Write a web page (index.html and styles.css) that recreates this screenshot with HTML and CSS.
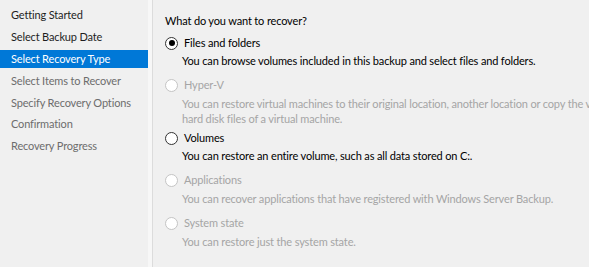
FILE: index.html
```html
<!DOCTYPE html>
<html lang="en">
  <head>
    <meta charset="UTF-8" />
    <title>Recovery Wizard</title>
    <link rel="stylesheet" href="styles.css">
  </head>
  <body>
    <div class="wizard">
      <ul class="steps">
        <li class="done">Getting Started</li>
        <li class="done">Select Backup Date</li>
        <li class="current">Select Recovery Type</li>
        <li>Select Items to Recover</li>
        <li>Specify Recovery Options</li>
        <li>Confirmation</li>
        <li>Recovery Progress</li>
      </ul>

      <div class="page">
        <p class="question">What do you want to recover?</p>

        <div class="option">
          <label><span class="radio checked"></span>Files and folders</label>
          <p class="desc">You can browse volumes included in this backup and select files and folders.</p>
        </div>

        <div class="option disabled two-line">
          <label><span class="radio"></span>Hyper-V</label>
          <p class="desc">You can restore virtual machines to their original location, another location or copy the virtual<br>hard disk files of a virtual machine.</p>
        </div>

        <div class="option">
          <label><span class="radio"></span>Volumes</label>
          <p class="desc">You can restore an entire volume, such as all data stored on C:.</p>
        </div>

        <div class="option disabled">
          <label><span class="radio"></span>Applications</label>
          <p class="desc">You can recover applications that have registered with Windows Server Backup.</p>
        </div>

        <div class="option disabled">
          <label><span class="radio"></span>System state</label>
          <p class="desc">You can restore just the system state.</p>
        </div>
      </div>
    </div>
  </body>
</html>
```

FILE: styles.css
```css
body {
  margin: 0;
  padding: 0;
  background-color: #f0f0f0;
  font-family: 'Lato', 'Noto Sans', sans-serif;
  font-size: 11px;
  letter-spacing: -0.15px;
  color: #000;
  overflow: hidden;
}
.wizard {
  display: flex;
  height: 267px;
}
.steps {
  list-style: none;
  margin: 0;
  padding: 6px 0 0 0;
  width: 148px;
  flex-shrink: 0;
  border-right: 4px solid #f7f7f7;
  box-shadow: 1px 0 0 #dcdcdc;
}
.steps li {
  height: 18px;
  line-height: 18px;
  padding-left: 11px;
  margin-bottom: 3.9px;
  color: #6d6d6d;
  white-space: nowrap;
}
.steps li.done {
  color: #1e1e1e;
}
.steps li.current {
  background-color: #0078d7;
  color: #fff;
}
.page {
  flex: 1;
  padding: 12px 0 0 13px;
  white-space: nowrap;
  overflow: hidden;
}
.question {
  margin: 0 0 4px 0;
  line-height: 18px;
}
.option {
  margin-bottom: 7px;
}
.option label {
  display: flex;
  align-items: center;
  height: 18px;
  line-height: 18px;
}
.radio {
  width: 11px;
  height: 11px;
  border: 1px solid #333;
  border-radius: 50%;
  background: #fff;
  margin-right: 6px;
  position: relative;
  flex-shrink: 0;
}
.radio.checked::after {
  content: "";
  position: absolute;
  left: 2.5px;
  top: 2.5px;
  width: 6px;
  height: 6px;
  border-radius: 50%;
  background: #000;
}
.desc {
  margin: 1px 0 0 17px;
  line-height: 16px;
}
.two-line {
  margin-bottom: 3px;
}
.two-line .desc {
  margin-top: 2px;
  line-height: 15px;
}
.disabled {
  color: #a5a5a5;
}
.disabled .desc {
  margin-top: 2px;
}
.disabled .radio {
  border-color: #c4c4c4;
}
```
